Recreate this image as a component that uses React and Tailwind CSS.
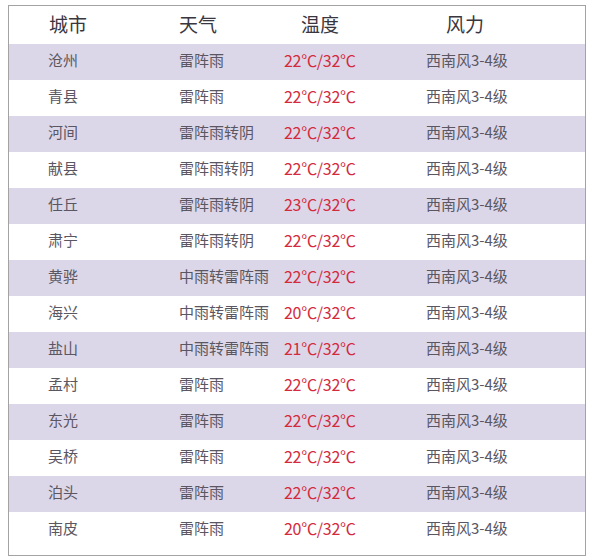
const rows = [
  ["沧州", "雷阵雨", "22℃/32℃"],
  ["青县", "雷阵雨", "22℃/32℃"],
  ["河间", "雷阵雨转阴", "22℃/32℃"],
  ["献县", "雷阵雨转阴", "22℃/32℃"],
  ["任丘", "雷阵雨转阴", "23℃/32℃"],
  ["肃宁", "雷阵雨转阴", "22℃/32℃"],
  ["黄骅", "中雨转雷阵雨", "22℃/32℃"],
  ["海兴", "中雨转雷阵雨", "20℃/32℃"],
  ["盐山", "中雨转雷阵雨", "21℃/32℃"],
  ["孟村", "雷阵雨", "22℃/32℃"],
  ["东光", "雷阵雨", "22℃/32℃"],
  ["吴桥", "雷阵雨", "22℃/32℃"],
  ["泊头", "雷阵雨", "22℃/32℃"],
  ["南皮", "雷阵雨", "20℃/32℃"],
];

const font = { fontFamily: '"Noto Sans CJK SC", "Liberation Sans", sans-serif' };

export default function App() {
  return (
    <div className="w-[592px] h-[559px] bg-white pt-[5px] pl-[8px]" style={font}>
      <div className="w-[578px] h-[551px] border border-[#a3a3a3] bg-white">
        {/* header */}
        <div className="grid grid-cols-[131px_105px_142px_1fr] h-[38px] items-center pl-[39px] pb-[1px] text-[19px] text-[#3a3640]">
          <div className="pl-[1px]">城市</div>
          <div>天气</div>
          <div className="pl-[17px]">温度</div>
          <div className="pl-[20px]">风力</div>
        </div>

        {rows.map((r, i) => (
          <div
            key={r[0]}
            className={
              "grid grid-cols-[131px_105px_142px_1fr] h-[36px] items-center pl-[39px] pb-[4px] text-[15px] text-[#5a5662] " +
              (i % 2 === 0 ? "bg-[#dcd7e8]" : "bg-white")
            }
          >
            <div>{r[0]}</div>
            <div>{r[1]}</div>
            <div className="text-[16px] text-[#d42a3e] tracking-[-0.3px]">{r[2]}</div>
            <div>西南风3-4级</div>
          </div>
        ))}
      </div>
    </div>
  );
}
